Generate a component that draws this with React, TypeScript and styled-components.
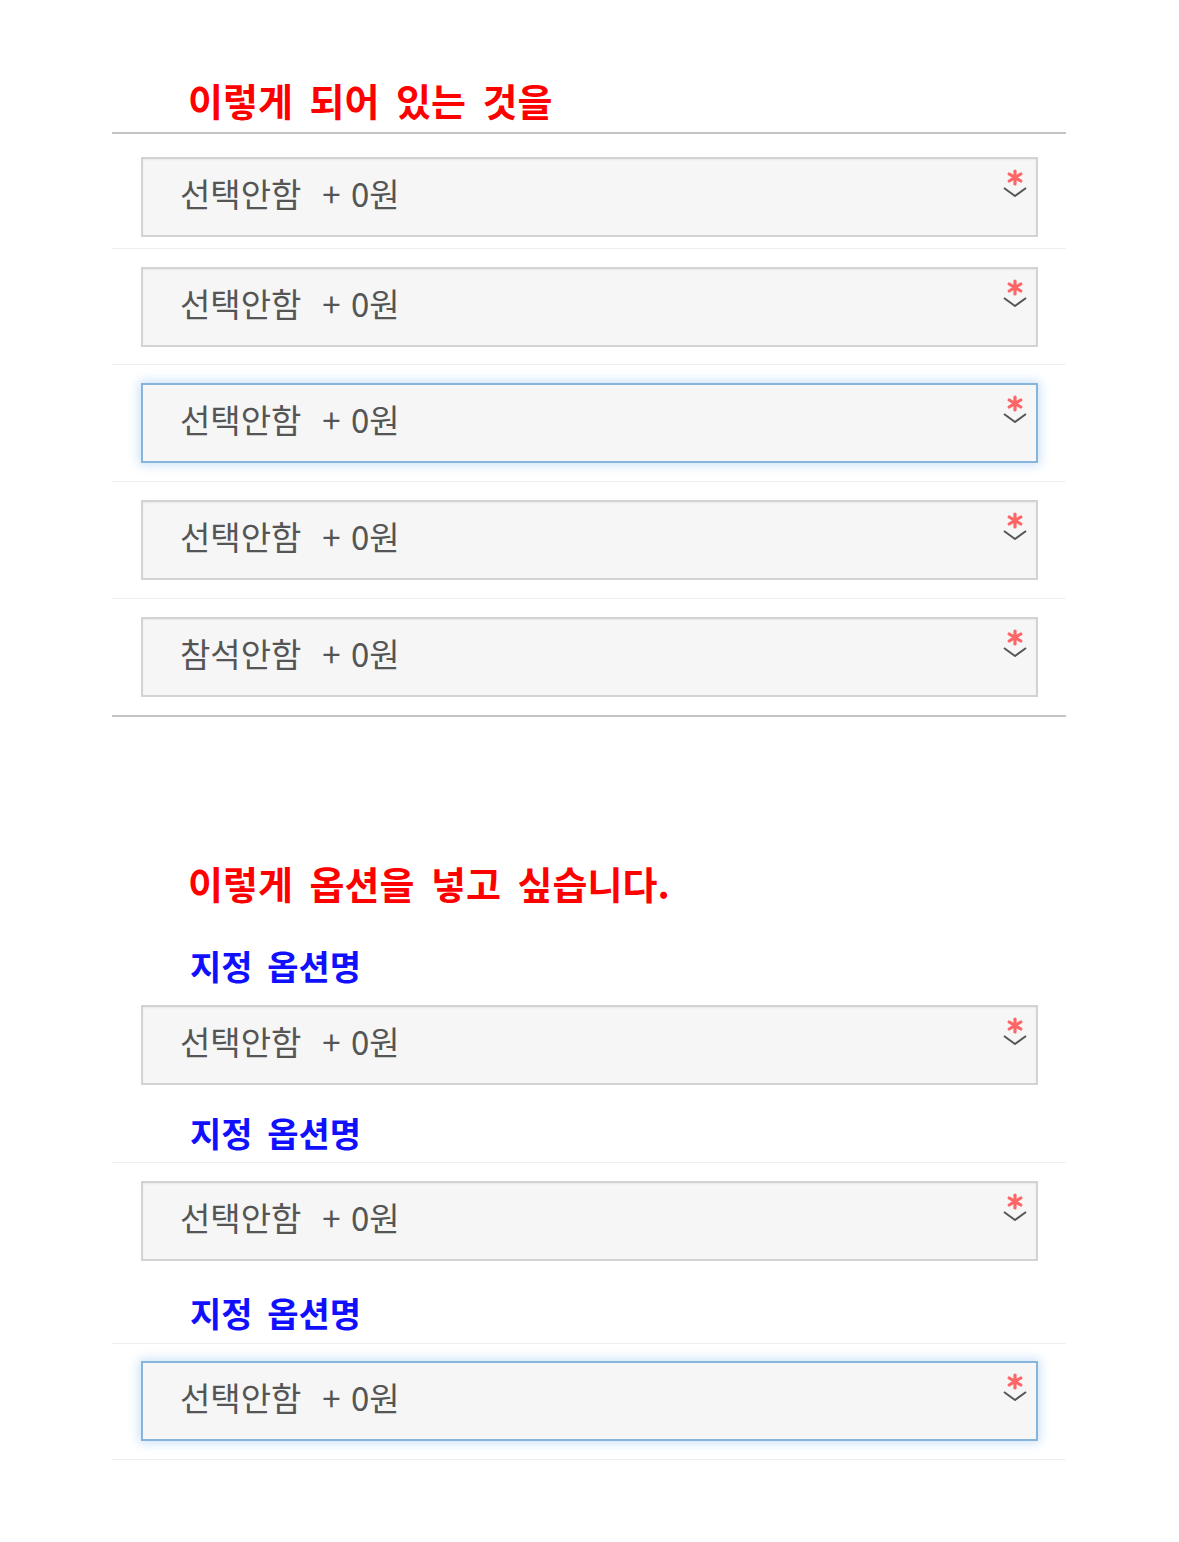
import React from "react";
import styled, { createGlobalStyle, css } from "styled-components";

const Global = createGlobalStyle`
  html, body { margin: 0; padding: 0; background: #ffffff; }
  body { font-family: "Noto Sans CJK KR", "Noto Sans", sans-serif; }
`;

const Page = styled.div`
  width: 954px;
  margin-left: 112px;
  padding-top: 74px;
  padding-bottom: 80px;
`;

const Title = styled.h2<{ $top?: number }>`
  margin: ${(p) => p.$top ?? 0}px 0 0 0;
  padding-left: 76px;
  font-size: 38px;
  line-height: 52px;
  font-weight: 700;
  color: #ff0000;
  letter-spacing: 0;
  word-spacing: 8px;
`;

const Rule = styled.div<{ $tone?: "dark" | "light" }>`
  height: ${(p) => (p.$tone === "light" ? 1 : 2)}px;
  background: ${(p) => (p.$tone === "light" ? "#efefef" : "#c4c4c4")};
`;

const Row = styled.div<{ $pt?: number; $pb?: number; $line?: "top" | "bottom" | "none" }>`
  padding: ${(p) => p.$pt ?? 18}px 28px ${(p) => p.$pb ?? 18}px 29px;
  ${(p) =>
    p.$line === "bottom" &&
    css`
      border-bottom: 1px solid #efefef;
    `}
  ${(p) =>
    p.$line === "top" &&
    css`
      border-top: 1px solid #efefef;
    `}
`;

const SelectBox = styled.div<{ $focus?: boolean }>`
  height: 80px;
  box-sizing: border-box;
  display: flex;
  align-items: center;
  justify-content: space-between;
  padding: 0 8px 0 37px;
  background: #f6f6f6;
  border: 2px solid ${(p) => (p.$focus ? "#86b4dc" : "#d3d3d3")};
  box-shadow: ${(p) =>
    p.$focus
      ? "0 0 10px 2px rgba(140, 190, 235, 0.45)"
      : "inset 0 1px 2px rgba(0,0,0,0.06)"};
`;

const ValueText = styled.span`
  font-size: 33px;
  color: #555555;
  white-space: pre;
  letter-spacing: 0;
  word-spacing: 3px;
  margin-top: -8px;
`;

const Indicator = styled.div`
  align-self: flex-start;
  margin-top: 10px;
  display: flex;
  flex-direction: column;
  align-items: center;
  gap: 0;
`;

const Label = styled.div<{ $top?: number }>`
  margin-top: ${(p) => p.$top ?? 0}px;
  padding-left: 78px;
  font-size: 34px;
  line-height: 40px;
  font-weight: 700;
  color: #1010ff;
  letter-spacing: 0;
  word-spacing: 7px;
`;

const Spacer = styled.div<{ $h: number }>`
  height: ${(p) => p.$h}px;
`;

function Asterisk() {
  return (
    <svg width="18" height="17" viewBox="0 0 18 17">
      <g stroke="#ff4d4d" strokeWidth="3.2" strokeLinecap="round" opacity="0.85">
        <line x1="9" y1="2" x2="9" y2="15" />
        <line x1="3.2" y1="5" x2="14.8" y2="12" />
        <line x1="3.2" y1="12" x2="14.8" y2="5" />
      </g>
    </svg>
  );
}

function Chevron() {
  return (
    <svg width="26" height="12" viewBox="0 0 26 12">
      <polyline
        points="2,2 13,10 24,2"
        fill="none"
        stroke="#555555"
        strokeWidth="2"
        strokeLinejoin="round"
      />
    </svg>
  );
}

function Select({ text, focus }: { text: string; focus?: boolean }) {
  return (
    <SelectBox $focus={focus}>
      <ValueText>{text}</ValueText>
      <Indicator>
        <Asterisk />
        <Chevron />
      </Indicator>
    </SelectBox>
  );
}

const first = [
  { text: "선택안함  + 0원", pt: 23, pb: 11 },
  { text: "선택안함  + 0원", pt: 18, pb: 17 },
  { text: "선택안함  + 0원", pt: 18, pb: 18, focus: true },
  { text: "선택안함  + 0원", pt: 18, pb: 18 },
  { text: "참석안함  + 0원", pt: 18, pb: 18 },
];

export default function App() {
  return (
    <>
      <Global />
      <Page>
        <Title>이렇게 되어 있는 것을</Title>
        <Spacer $h={6} />
        <Rule />
        {first.map((r, i) => (
          <Row
            key={i}
            $pt={r.pt}
            $pb={r.pb}
            $line={i < first.length - 1 ? "bottom" : "none"}
          >
            <Select text={r.text} focus={r.focus} />
          </Row>
        ))}
        <Rule />

        <Title $top={140}>이렇게 옵션을 넣고 싶습니다.</Title>
        <Label $top={37}>지정 옵션명</Label>
        <Row $pt={19} $pb={0} $line="none">
          <Select text="선택안함  + 0원" />
        </Row>
        <Label $top={28}>지정 옵션명</Label>
        <Spacer $h={9} />
        <Row $pt={18} $pb={0} $line="top">
          <Select text="선택안함  + 0원" />
        </Row>
        <Label $top={32}>지정 옵션명</Label>
        <Spacer $h={10} />
        <Row $pt={17} $pb={18} $line="top">
          <Select text="선택안함  + 0원" focus />
        </Row>
        <Rule $tone="light" />
      </Page>
    </>
  );
}
